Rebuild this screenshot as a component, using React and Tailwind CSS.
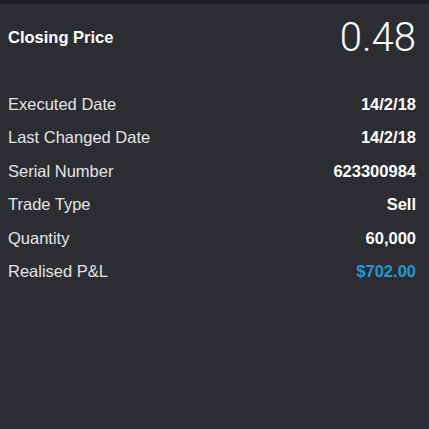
const rows = [
  { label: "Executed Date", value: "14/2/18" },
  { label: "Last Changed Date", value: "14/2/18" },
  { label: "Serial Number", value: "623300984" },
  { label: "Trade Type", value: "Sell" },
  { label: "Quantity", value: "60,000" },
  { label: "Realised P&L", value: "$702.00", accent: true },
]

export default function App() {
  return (
    <div className="w-[429px] h-[429px] bg-[#2c2d31] font-['Liberation_Sans',Arial,sans-serif] overflow-hidden">
      {/* top strip */}
      <div className="h-[4px] bg-[#1d1e21]" />

      {/* header */}
      <div className="h-[67px] flex items-center justify-between pl-[8px] pr-[13px]">
        <span className="text-[16.5px] font-bold text-white">Closing Price</span>
        <span className="text-[40px] font-light text-white font-['Roboto',sans-serif] leading-none">0.48</span>
      </div>

      {/* details */}
      <div className="pt-[16.5px]">
        {rows.map((r) => (
          <div key={r.label} className="h-[33.5px] flex items-center justify-between pl-[8px] pr-[13px]">
            <span className="text-[16.5px] text-[#e4e4e6]">{r.label}</span>
            <span className={`text-[16.5px] font-bold ${r.accent ? "text-[#1e9bd7]" : "text-white"}`}>
              {r.value}
            </span>
          </div>
        ))}
      </div>
    </div>
  )
}
